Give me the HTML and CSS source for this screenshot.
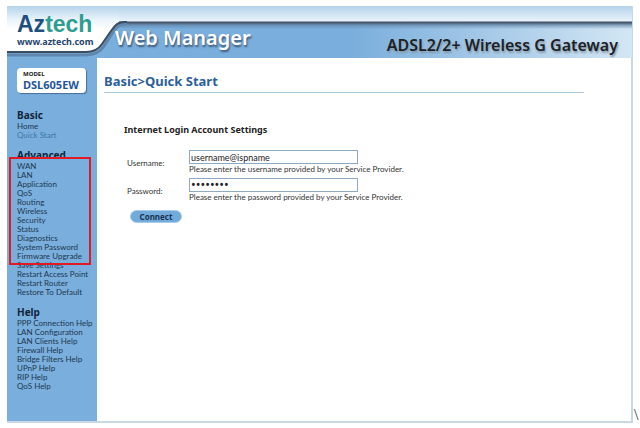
FILE: index.html
```html
<!DOCTYPE html>
<html lang="en">
<head>
    <meta charset="UTF-8">
    <meta name="viewport" content="width=device-width, initial-scale=1.0">
    <title>Web Manager</title>
    <link rel="stylesheet" href="styles.css">
</head>
<body>
    <div class="container">
        <header class="header">
            <svg class="header-tab" width="120" height="52" viewBox="0 0 120 52" aria-hidden="true">
                <defs>
                    <linearGradient id="tabFill" x1="0" y1="0" x2="0" y2="1">
                        <stop offset="0" stop-color="#b4d3ea"/>
                        <stop offset="0.3" stop-color="#eaf4fb"/>
                        <stop offset="0.5" stop-color="#ffffff"/>
                    </linearGradient>
                </defs>
                <path d="M0 0H112V16C109 17 107 20 104 25L95 38C91 44 86 46 79 46H0Z" fill="url(#tabFill)"/>
                <path d="M120 18H118C112 18 109 21 106 26L97 40C93 46 87 49 79 49H0" fill="none" stroke="#5f87ad" stroke-width="3"/>
                <path d="M120 16H118C111 16 108 19 104 25L95 38C91 44 86 46 79 46H0" fill="none" stroke="#3b4b60" stroke-width="2"/>
            </svg>
            <div class="logo">
                <div class="logo-name"><span>Az</span>tech</div>
                <div class="logo-url">www.aztech.com</div>
            </div>
            <h1>Web Manager</h1>
            <p class="product">ADSL2/2+ Wireless G Gateway</p>
        </header>

        <div class="main">
            <nav class="sidebar">
                <div class="model">
                    <div class="model-label">MODEL</div>
                    <div class="model-name">DSL605EW</div>
                </div>

                <h2>Basic</h2>
                <ul>
                    <li><a href="#">Home</a></li>
                    <li><a href="#" class="active">Quick Start</a></li>
                </ul>

                <h2>Advanced</h2>
                <div class="advanced">
                    <ul>
                        <li><a href="#">WAN</a></li>
                        <li><a href="#">LAN</a></li>
                        <li><a href="#">Application</a></li>
                        <li><a href="#">QoS</a></li>
                        <li><a href="#">Routing</a></li>
                        <li><a href="#">Wireless</a></li>
                        <li><a href="#">Security</a></li>
                        <li><a href="#">Status</a></li>
                        <li><a href="#">Diagnostics</a></li>
                        <li><a href="#">System Password</a></li>
                        <li><a href="#">Firmware Upgrade</a></li>
                    </ul>
                    <div class="highlight"></div>
                </div>
                <ul>
                    <li><a href="#">Save Settings</a></li>
                    <li><a href="#">Restart Access Point</a></li>
                    <li><a href="#">Restart Router</a></li>
                    <li><a href="#">Restore To Default</a></li>
                </ul>

                <h2>Help</h2>
                <ul>
                    <li><a href="#">PPP Connection Help</a></li>
                    <li><a href="#">LAN Configuration</a></li>
                    <li><a href="#">LAN Clients Help</a></li>
                    <li><a href="#">Firewall Help</a></li>
                    <li><a href="#">Bridge Filters Help</a></li>
                    <li><a href="#">UPnP Help</a></li>
                    <li><a href="#">RIP Help</a></li>
                    <li><a href="#">QoS Help</a></li>
                </ul>
            </nav>

            <main class="content">
                <h2 class="page-title">Basic&gt;Quick Start</h2>
                <form class="login-form">
                    <h3>Internet Login Account Settings</h3>
                    <div class="field">
                        <label for="username">Username:</label>
                        <div class="field-body">
                            <input type="text" id="username" value="username@ispname">
                            <p>Please enter the username provided by your Service Provider.</p>
                        </div>
                    </div>
                    <div class="field">
                        <label for="password">Password:</label>
                        <div class="field-body">
                            <input type="password" id="password" value="password">
                            <p>Please enter the password provided by your Service Provider.</p>
                        </div>
                    </div>
                    <button type="button">Connect</button>
                </form>
            </main>
        </div>
    </div>
    <span class="mark">\</span>
</body>
</html>
```

FILE: styles.css
```css
:root {
    --blue: #7aaedc;
    --title: #2c5f9b;
    --line: #a9c9da;
    --text: #333;
}

* {
    margin: 0;
    padding: 0;
    box-sizing: border-box;
}

body {
    display: flex;
    min-height: 100vh;
    padding: 6px 0 5px 7px;
    font-family: Lato, "Noto Sans", sans-serif;
    font-size: 8px;
    background: #fff;
    color: var(--text);
}

.container {
    flex: 1;
    display: flex;
    flex-direction: column;
    border: solid #c8d9e4;
    border-width: 0 2px 2px 0;
}

.header {
    position: relative;
    display: flex;
    align-items: center;
    height: 52px;
    margin-right: -1px;
    font-family: "Noto Sans", "Open Sans", sans-serif;
    background:
        linear-gradient(to bottom, #b4d3ea, #e8f3fb 15px, #3f5063 16px, #4d6077 17px, rgba(95, 130, 165, 0.7) 19px, rgba(122, 174, 220, 0) 23px),
        linear-gradient(to right, var(--blue) 55%, #d3e6f4);
}

.header-tab {
    position: absolute;
    top: 0;
    left: 0;
}

.logo {
    position: relative;
    width: 108px;
    padding: 0 0 6px 10px;
    font-family: "Liberation Sans", Arial, sans-serif;
    font-weight: bold;
}

.logo-name {
    font-size: 23px;
    line-height: 26px;
    color: #2f9c90;
}

.logo-name span {
    color: #1f4f80;
}

.logo-url {
    font-family: "Noto Sans", sans-serif;
    font-size: 9px;
    line-height: 10px;
    color: #24466b;
}

.header h1 {
    position: relative;
    padding-top: 12px;
    font-size: 20px;
    font-weight: 600;
    line-height: 24px;
    color: #fff;
    text-shadow: 1px 2px 2px #3c5878;
}

.product {
    margin-left: auto;
    padding: 26px 14px 0 0;
    font-size: 16px;
    font-weight: 600;
    line-height: 20px;
    color: #1c2126;
    text-shadow: 1px 2px 2px #8598a8;
}

.main {
    flex: 1;
    display: flex;
}

.sidebar {
    width: 90px;
    padding: 10px 0 0 10px;
    background: var(--blue);
}

.model {
    width: 69px;
    height: 25px;
    margin-bottom: 15px;
    padding: 2px 0 0 6px;
    border-radius: 4px;
    background: #fff;
    box-shadow: 1px 1px 1px #456f99;
    font-family: "Noto Sans", sans-serif;
    font-weight: bold;
    white-space: nowrap;
}

.model-label {
    font-size: 6px;
    line-height: 8px;
    color: #222;
}

.model-name {
    font-size: 11px;
    line-height: 14px;
    color: #24549a;
}

.sidebar h2 {
    font-family: "Noto Sans", sans-serif;
    font-size: 10px;
    line-height: 14px;
    color: #10253a;
}

.sidebar ul {
    list-style: none;
}

.sidebar ul + h2 {
    margin-top: 8px;
}

.sidebar li {
    line-height: 9px;
    white-space: nowrap;
}

.sidebar a {
    color: #1d3850;
    text-decoration: none;
}

.sidebar a.active {
    color: #3f76a8;
}

.advanced {
    position: relative;
}

.highlight {
    position: absolute;
    inset: -5px 6px -4px -8px;
    border: 2px solid #e01b24;
}

.content {
    flex: 1;
    padding: 14px 47px 0 7px;
}

.page-title {
    padding-bottom: 2px;
    border-bottom: 1px solid var(--line);
    font-family: "Noto Sans", sans-serif;
    font-size: 13px;
    line-height: 18px;
    color: var(--title);
}

.login-form {
    padding: 30px 0 0 20px;
}

.login-form h3 {
    margin-bottom: 13px;
    font-family: "Noto Sans", sans-serif;
    font-size: 9px;
    line-height: 14px;
    color: #222;
}

.field {
    display: flex;
    align-items: center;
    margin-bottom: 3px;
    padding-left: 3px;
}

.field label {
    width: 62px;
}

.field input {
    display: block;
    width: 169px;
    height: 14px;
    padding: 0 1px;
    border: 1px solid #8ea9c4;
    background: #fff;
    font-family: Lato, Arial, sans-serif;
    font-size: 9px;
    color: #222;
}

.field input[type="password"] {
    font-family: Roboto, Arial, sans-serif;
    font-size: 14px;
}

.field p {
    line-height: 11px;
}

.login-form button {
    width: 52px;
    height: 13px;
    margin: 4px 0 0 6px;
    border: 1px solid #a9cdea;
    border-radius: 7px;
    background: #72aadc;
    font-family: "Noto Sans", sans-serif;
    font-size: 8px;
    font-weight: bold;
    line-height: 11px;
    color: #17334f;
}

.mark {
    align-self: flex-end;
    width: 7px;
    padding-left: 1px;
    font-family: "Liberation Serif", serif;
    font-size: 16px;
    line-height: 16px;
}
```
